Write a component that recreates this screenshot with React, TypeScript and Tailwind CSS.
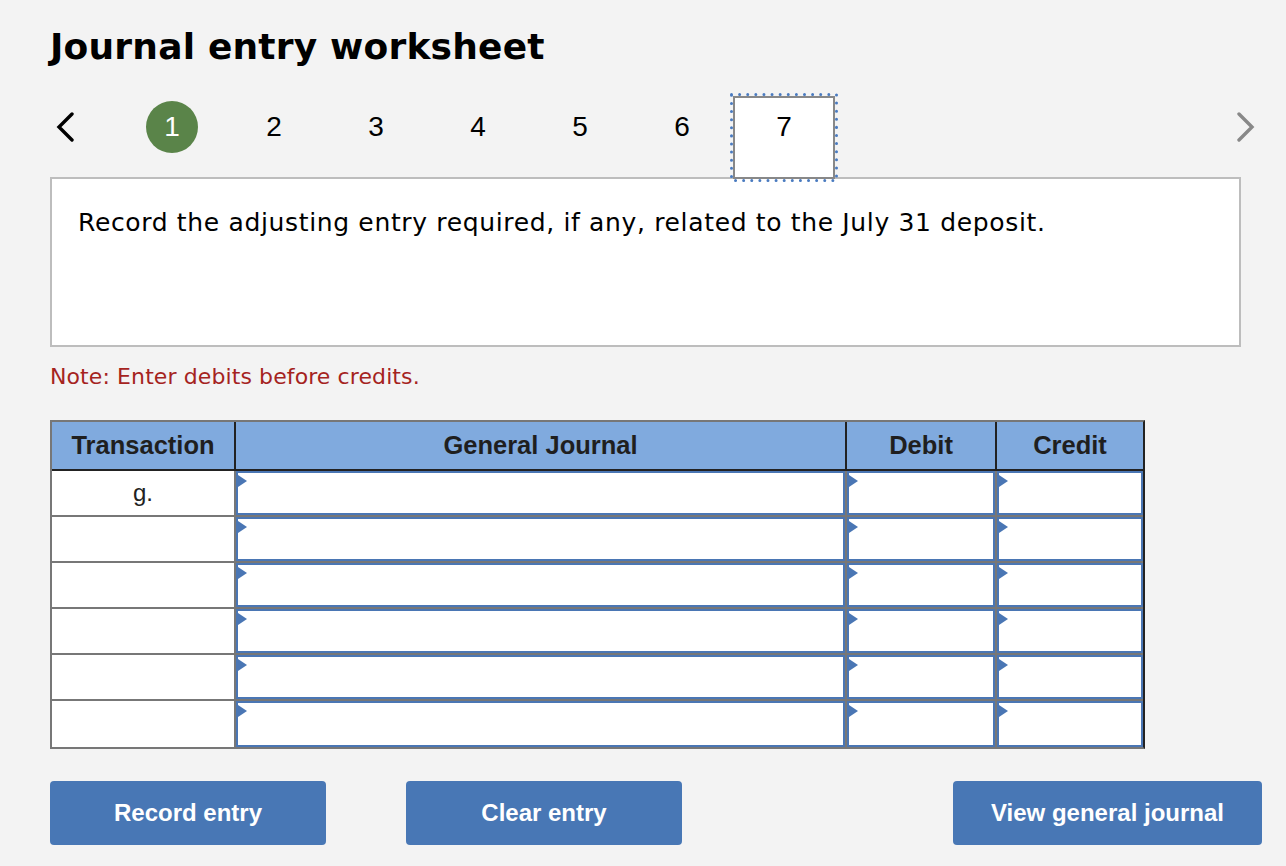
import type { ReactNode } from "react";

const STEPS = [1, 2, 3, 4, 5, 6, 7];
const ACTIVE_STEP = 1;
const FOCUSED_STEP = 7;
const ROWS = ["g.", "", "", "", "", ""];

const sans = "font-['Liberation_Sans',Arial,sans-serif]";
const verdana = "font-['DejaVu_Sans',Verdana,sans-serif]";

function Chevron({ dir, color }: { dir: "left" | "right"; color: string }) {
  const points = dir === "left" ? "16,2 3,15 16,28" : "2,2 15,15 2,28";
  return (
    <svg width="18" height="30" viewBox="0 0 18 30" fill="none">
      <polyline
        points={points}
        stroke={color}
        strokeWidth="3.4"
        strokeLinecap="round"
        strokeLinejoin="miter"
      />
    </svg>
  );
}

// dotted focus ring drawn round the focused tab
function FocusRing() {
  return (
    <svg
      className="pointer-events-none absolute -left-[5px] -top-[5px]"
      width="108"
      height="89"
      viewBox="0 0 108 89"
      fill="none"
    >
      <rect
        x="1.5"
        y="1.5"
        width="105"
        height="86"
        stroke="#4a7bc0"
        strokeWidth="3"
        strokeLinecap="round"
        strokeDasharray="0.01 8.1"
      />
    </svg>
  );
}

function StepTab({ n }: { n: number }) {
  if (n === FOCUSED_STEP) {
    return (
      <div className="relative z-10 flex h-[83px] w-[102px] justify-center border-2 border-[#888] bg-white pt-[3px]">
        <div className="flex h-[52px] w-[52px] items-center justify-center text-[28px] text-black">
          {n}
        </div>
        <FocusRing />
      </div>
    );
  }
  return (
    <div className="flex h-[81px] w-[102px] justify-center pt-[5px]">
      <div
        className={
          n === ACTIVE_STEP
            ? "flex h-[52px] w-[52px] items-center justify-center rounded-full bg-[#5a8449] text-[28px] text-white"
            : "flex h-[52px] w-[52px] items-center justify-center text-[28px] text-black"
        }
      >
        {n}
      </div>
    </div>
  );
}

function EntryInput({ last }: { last?: boolean }) {
  return (
    <div
      className={
        last
          ? "h-full flex-1 p-0"
          : "h-full flex-1 border-r-2 border-[#777] p-0"
      }
    >
      <div className="relative h-full w-full border-2 border-[#4a76b4] bg-white">
        {/* little marker in the corner of each field */}
        <span className="absolute left-0 top-[2px] h-0 w-0 border-y-[6px] border-l-[9px] border-y-transparent border-l-[#4a76b4]" />
      </div>
    </div>
  );
}

function HeadCell({
  children,
  className,
}: {
  children: ReactNode;
  className: string;
}) {
  return (
    <div
      className={`flex items-center justify-center text-[25.5px] font-bold text-[#1f1f1f] ${className}`}
    >
      {children}
    </div>
  );
}

function ActionButton({
  label,
  className,
}: {
  label: string;
  className: string;
}) {
  return (
    <button
      type="button"
      className={`h-[64px] rounded-[4px] bg-[#4877b5] text-[24px] font-bold text-white ${sans} ${className}`}
    >
      {label}
    </button>
  );
}

export default function App() {
  return (
    <div className="min-h-[866px] w-full bg-[#f3f3f3] pl-[50px]">
      <h1
        className={`pt-[25px] text-[36px] font-bold leading-[44px] tracking-[0.2px] text-black ${verdana}`}
      >
        Journal entry worksheet
      </h1>

      <div className={`mt-[27px] flex h-[81px] w-[1212px] items-start ${sans}`}>
        <div className="flex h-[81px] w-[71px] items-start pl-[6px] pt-[16px]">
          <Chevron dir="left" color="#000" />
        </div>
        {STEPS.map((n) => (
          <StepTab key={n} n={n} />
        ))}
        <div className="ml-auto mr-[7px] pt-[16px]">
          <Chevron dir="right" color="#888" />
        </div>
      </div>

      <div
        className={`h-[170px] w-[1191px] border-2 border-[#bdbdbd] bg-white pl-[26px] pt-[30px] text-[25px] leading-[28px] tracking-[0.65px] text-black ${verdana}`}
      >
        Record the adjusting entry required, if any, related to the July 31
        deposit.
      </div>

      <p
        className={`mt-[17px] text-[22px] leading-[26px] tracking-[0.1px] text-[#a5231e] ${verdana}`}
      >
        Note: Enter debits before credits.
      </p>

      <div
        className={`mt-[30px] w-[1095px] border-2 border-[#777] border-r-[#222] ${sans}`}
      >
        <div className="flex h-[49px] border-b-2 border-[#222] bg-[#80aade]">
          <HeadCell className="w-[184px] border-r-2 border-[#222]">
            Transaction
          </HeadCell>
          <HeadCell className="w-[611px] border-r-2 border-[#222]">
            General Journal
          </HeadCell>
          <HeadCell className="w-[150px] border-r-2 border-[#222]">
            Debit
          </HeadCell>
          <HeadCell className="flex-1">Credit</HeadCell>
        </div>
        {ROWS.map((label, i) => (
          <div
            key={i}
            className={
              i < ROWS.length - 1
                ? "flex h-[46px] border-b-2 border-[#777]"
                : "flex h-[46px]"
            }
          >
            <div className="flex h-full w-[184px] justify-center border-r-2 border-[#777] bg-white pt-[8px] text-[24px] leading-[28px] text-[#222]">
              {label}
            </div>
            <div className="flex h-full w-[611px]">
              <EntryInput />
            </div>
            <div className="flex h-full w-[150px]">
              <EntryInput />
            </div>
            <div className="flex h-full flex-1">
              <EntryInput last />
            </div>
          </div>
        ))}
      </div>

      <div className="mt-[32px] flex w-[1212px]">
        <ActionButton label="Record entry" className="w-[276px]" />
        <ActionButton label="Clear entry" className="ml-[80px] w-[276px]" />
        <ActionButton label="View general journal" className="ml-auto w-[309px]" />
      </div>
    </div>
  );
}
